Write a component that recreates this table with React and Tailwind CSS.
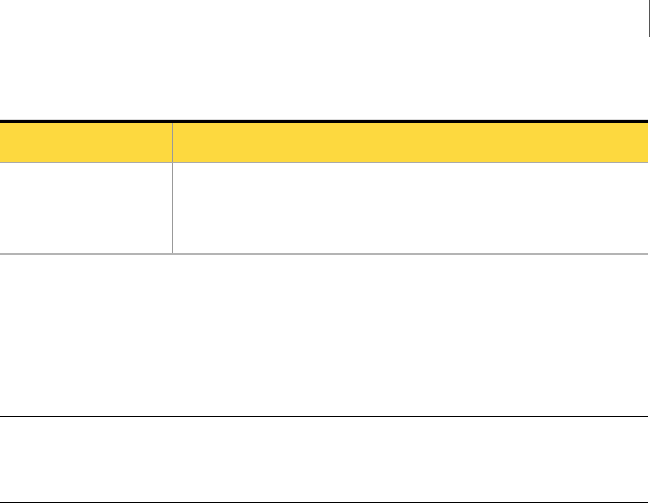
export default function App() {
  return (
    <div className="relative w-[651px] h-[504px] bg-white overflow-hidden font-['Liberation_Sans',sans-serif]">
      {/* page-edge marker at top right */}
      <div className="absolute right-[1px] top-0 w-px h-[37px] bg-[#555]" />

      <div className="pt-[119px] w-[648px]">
        <div className="h-px bg-[#dcdcdc]" />
        <div className="h-[3px] bg-black" />
        <div className="flex h-[39px] bg-[#fdd93f]">
          <div className="w-[173px] border-r border-[#999]" />
          <div className="flex-1" />
        </div>
        <div className="h-px bg-[#aaa]" />
        <div className="flex h-[90px]">
          <div className="w-[173px] border-r border-[#999]" />
          <div className="flex-1" />
        </div>
        <div className="h-[2px] bg-[#b4b4b4]" />
      </div>

      <div className="mt-[161px] w-[648px] h-px bg-black" />
      <div className="mt-[85px] w-[648px] h-px bg-black" />
    </div>
  );
}
